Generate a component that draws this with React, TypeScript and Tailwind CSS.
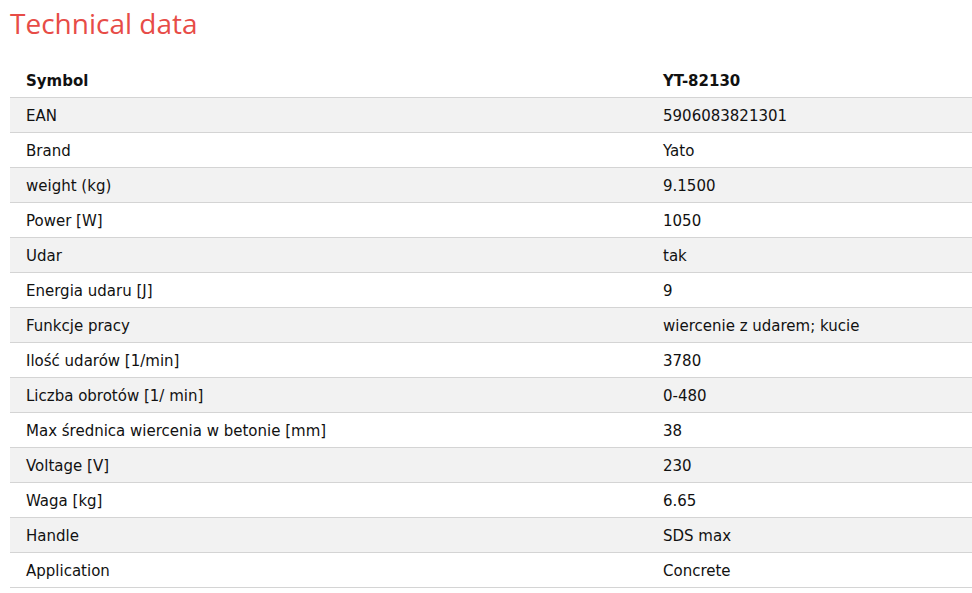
import React from "react";

const rows: [string, string][] = [
  ["EAN", "5906083821301"],
  ["Brand", "Yato"],
  ["weight (kg)", "9.1500"],
  ["Power [W]", "1050"],
  ["Udar", "tak"],
  ["Energia udaru [J]", "9"],
  ["Funkcje pracy", "wiercenie z udarem; kucie"],
  ["Ilość udarów [1/min]", "3780"],
  ["Liczba obrotów [1/ min]", "0-480"],
  ["Max średnica wiercenia w betonie [mm]", "38"],
  ["Voltage [V]", "230"],
  ["Waga [kg]", "6.65"],
  ["Handle", "SDS max"],
  ["Application", "Concrete"],
];

export default function App() {
  return (
    <div className="w-[972px] h-[593px] bg-white overflow-hidden pl-[10px]">
      <h1 className="text-[28px] leading-[40px] pt-[3px] text-[#e74c47] font-['Open_Sans',sans-serif] font-normal">
        Technical data
      </h1>
      <div className="mt-[20px] font-['DejaVu_Sans',Verdana,sans-serif] text-[15px] text-[#111]">
        <div className="flex h-[35px] items-center pt-[2px] border-b border-[#d4d4d4]">
          <div className="w-[637px] pl-[16px] font-bold">Symbol</div>
          <div className="pl-[16px] font-bold">YT-82130</div>
        </div>
        {rows.map(([k, v], i) => (
          <div
            key={k}
            className={
              "flex h-[35px] items-center pt-[2px] border-b border-[#d4d4d4] " +
              (i % 2 === 0 ? "bg-[#f2f2f2]" : "bg-white")
            }
          >
            <div className="w-[637px] pl-[16px]">{k}</div>
            <div className="pl-[16px]">{v}</div>
          </div>
        ))}
      </div>
    </div>
  );
}
